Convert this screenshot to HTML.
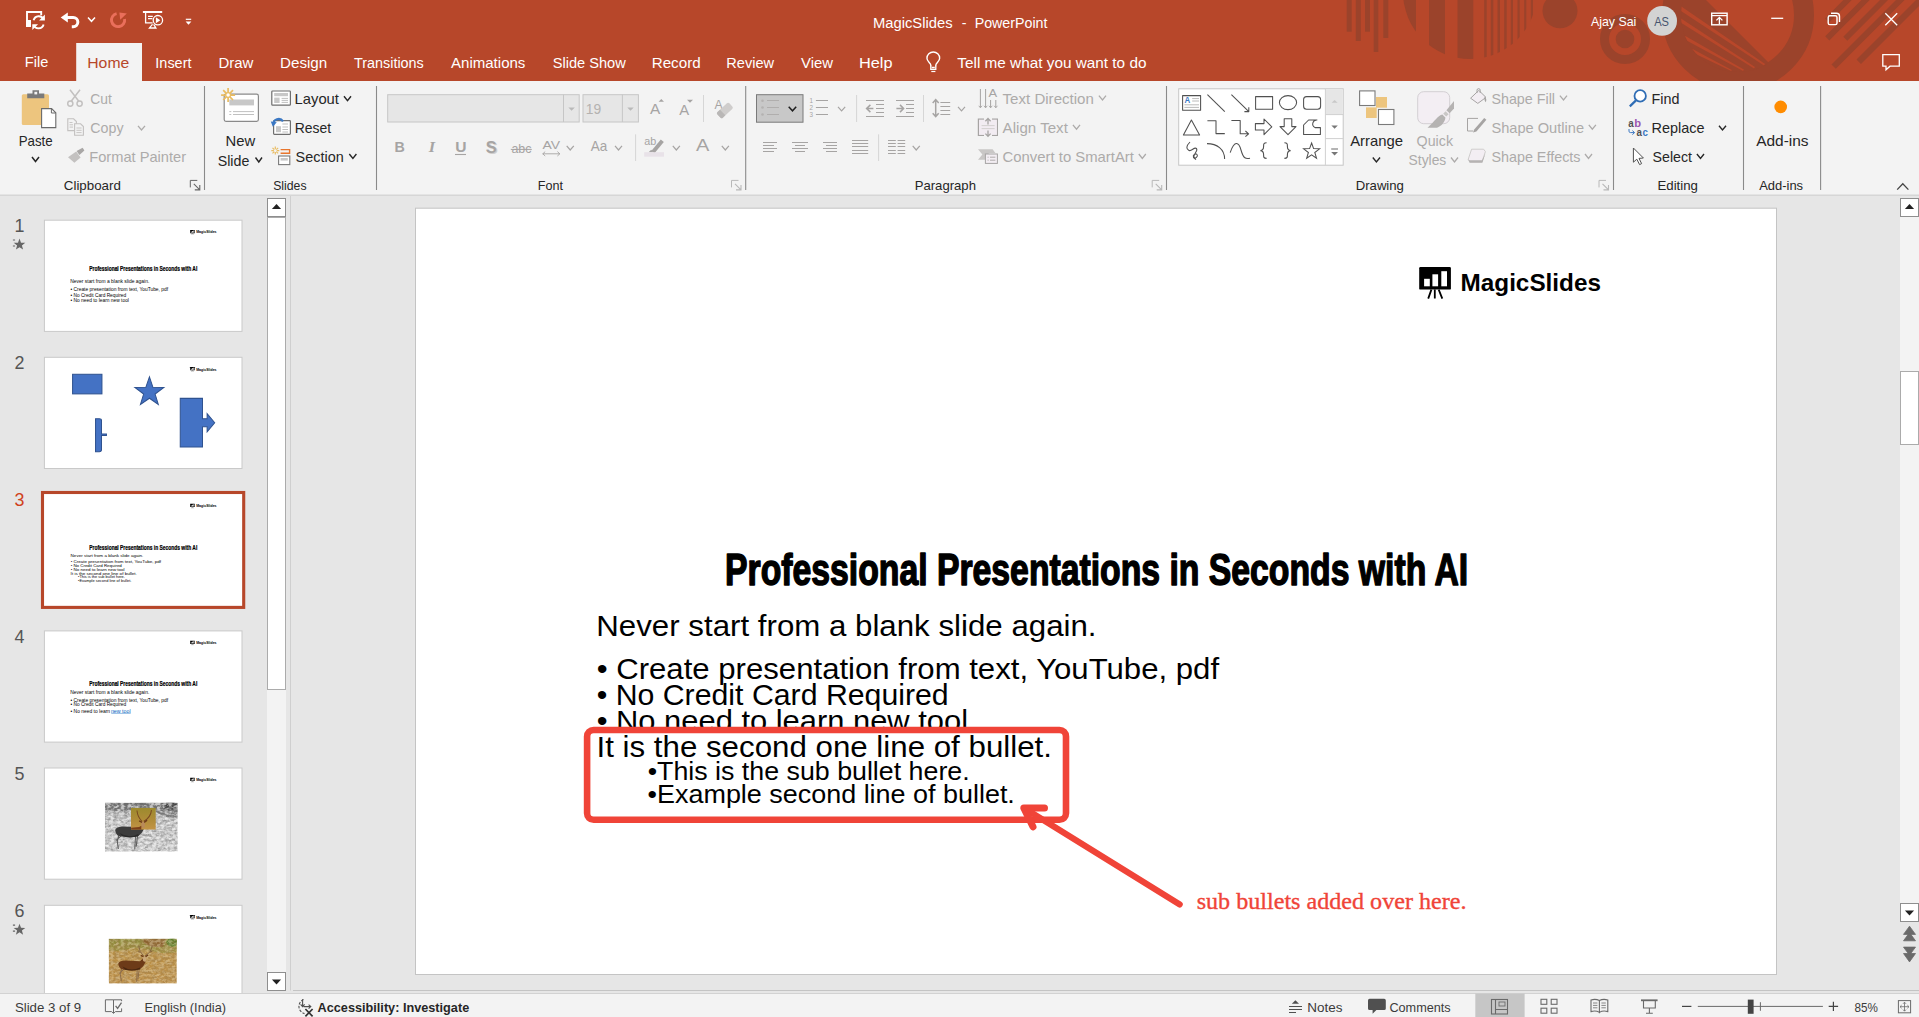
<!DOCTYPE html>
<html lang="en"><head><meta charset="utf-8"><title>MagicSlides - PowerPoint</title>
<style>
html,body{margin:0;padding:0;width:1919px;height:1017px;overflow:hidden;background:#E6E6E6;font-family:"Liberation Sans",sans-serif}
.r{position:absolute;overflow:hidden}
.r svg{display:block;font-family:"Liberation Sans",sans-serif}
svg text{white-space:pre}
</style></head><body>

<div class="r titlebar" style="left:0px;top:0px;width:1919px;height:81px;background:#B7472A"><svg width="1919" height="81" viewBox="0 0 1919 81"><g fill="#9B432B">
<rect x="1346.7" y="0" width="5.0" height="31.7"/>
<rect x="1355.8" y="0" width="5.0" height="41"/>
<rect x="1365" y="0" width="5.0" height="31.7"/>
<rect x="1373.7" y="0" width="4.6" height="52"/>
<rect x="1383.3" y="0" width="5.0" height="38"/>
</g>
<clipPath id="cpA"><circle cx="1470" cy="-8" r="67"/></clipPath>
<g clip-path="url(#cpA)" fill="#9B432B">
<rect x="1400" y="0" width="16.0" height="70"/>
<rect x="1429" y="0" width="16.0" height="70"/>
<rect x="1457.5" y="0" width="15.8" height="70"/>
<rect x="1484.2" y="0" width="2.5" height="70"/>
<rect x="1490.8" y="0" width="2.5" height="70"/>
<rect x="1497.5" y="0" width="2.5" height="70"/>
<rect x="1504.2" y="0" width="2.5" height="70"/>
<rect x="1510.8" y="0" width="2.2" height="70"/>
<rect x="1517.5" y="0" width="2.2" height="70"/>
<rect x="1524.2" y="0" width="2.1" height="70"/>
<rect x="1530.8" y="0" width="2.2" height="70"/>
</g>
<circle cx="1560" cy="10.8" r="17.5" fill="#9B432B"/>
<circle cx="1625" cy="39" r="20.5" fill="none" stroke="#9B432B" stroke-width="9"/><circle cx="1625" cy="39" r="9.3" fill="#9B432B"/>
<clipPath id="cpB"><rect x="0" y="0" width="1919" height="81"/></clipPath>
<g clip-path="url(#cpB)"><circle cx="1738" cy="15" r="66" fill="none" stroke="#9B432B" stroke-width="20"/>
<clipPath id="cpC"><circle cx="1738" cy="15" r="57"/></clipPath>
<g clip-path="url(#cpC)"><path d="M1695 -11L1780 74L1660 90L1660 -11Z" fill="#9B432B"/>
<path d="M1674.9 7.0L1763.9 65.6L1765.1 64.0L1677.1 3.6Z M1675.0 19.1L1754.0 68.6L1755.0 67.0L1677.0 15.9Z M1679.1 36.6L1743.1 71.0L1743.9 69.6L1680.9 33.4Z M1689.3 50.9L1731.2 71.1L1731.8 69.9L1690.7 48.1Z" fill="#B8472A"/>
</g></g>
<path d="M1825.0 18.4L1829.2 22.6L2029.2 -177.4L2025.0 -181.6Z M1825.2 36.3L1829.3 40.4L2029.3 -159.6L2025.2 -163.7Z M1843.3 36.7L1847.3 40.7L2047.3 -159.3L2043.3 -163.3Z M1831.5 64.5L1835.8 68.8L2035.8 -131.2L2031.5 -135.5Z M1856.5 59.5L1861.0 64.0L2061.0 -136.0L2056.5 -140.5Z" fill="#9B432B"/>
<g fill="none" stroke="#fff" stroke-width="1.9" stroke-linejoin="miter"><path d="M31 26H27V12H41.200V15.200"/></g><rect x="26.100" y="20" width="4.900" height="7" fill="#fff"/><g fill="none" stroke="#fff" stroke-width="1.900"><path d="M43.700 19.400A5.400 5.400 0 0 0 33.600 20.200"/><path d="M33.500 25.200A5.400 5.400 0 0 0 43.600 24.400"/></g><path d="M44.900 14.600V20.400H39.100Z" fill="#fff"/><path d="M32.300 30V24.200H38.100Z" fill="#fff"/>
<path d="M60.700 17.400L67.800 12.400V22.400Z" fill="#fff"/><path d="M66.500 17.400H73.200A4.650 4.650 0 0 1 73.200 26.700H71.800" fill="none" stroke="#fff" stroke-width="3"/>
<path d="M88.0 17.5L91.5 21.3L95.0 17.5" fill="none" stroke="#fff" stroke-width="1.5"/>
<path d="M116.600 13.600A6.600 6.600 0 1 0 124.600 19" fill="none" stroke="#EA6F5B" stroke-width="2.900"/><path d="M119.400 12.400L126.800 13.400L120.200 19.800Z" fill="#EA6F5B"/>
<path d="M142.900 12H162.200" stroke="#fff" stroke-width="2"/><g fill="none" stroke="#fff" stroke-width="1.300"><path d="M145.600 12.500V22.800H152.600"/><path d="M148 16.400H152.800M148 18.600H152.400" stroke-width="1.200"/><circle cx="157.900" cy="20.200" r="4.700"/></g><path d="M152.300 23.400L148.100 28.800H157L154.600 24.600L152.300 24.600Z" fill="#fff"/><path d="M150.800 27.200L152.400 25.200H153.600L154.600 27.200Z" fill="#B7472A"/><path d="M155.900 17.200V23.200L160.300 20.200Z" fill="#fff"/>
<path d="M185.8 19.3H191.2" stroke="#fff" stroke-width="1.2"/><path d="M185.6 21.6H191.4L188.5 24.8Z" fill="#fff"/>
<text x="872.93" y="27.8" font-size="15.2" fill="#fff" textLength="79.68" lengthAdjust="spacingAndGlyphs">MagicSlides</text><text x="961.80" y="27.8" font-size="15.2" fill="#fff" textLength="4.75" lengthAdjust="spacingAndGlyphs">-</text><text x="974.66" y="27.8" font-size="15.2" fill="#fff" textLength="72.81" lengthAdjust="spacingAndGlyphs">PowerPoint</text>
<text x="1591.00" y="25.7" font-size="12.4" fill="#fff" textLength="45.35" lengthAdjust="spacingAndGlyphs">Ajay Sai</text>
<circle cx="1662.100" cy="20.900" r="14.900" fill="#D3D3D3"/>
<text x="1654.20" y="25.6" font-size="12.2" fill="#46546E" textLength="14.82" lengthAdjust="spacingAndGlyphs">AS</text>
<g fill="none" stroke="#fff" stroke-width="1.4"><rect x="1711.7" y="13.2" width="15.4" height="11.6"/><path d="M1711.7 15.6H1727" stroke-width="1.2"/><path d="M1719.4 24V17.6M1716.4 20.4L1719.4 17.4L1722.4 20.4" stroke-width="1.3"/><path d="M1771.2 18.3H1783.2" stroke-width="1.3"/><rect x="1828.2" y="15.8" width="8.8" height="8.8" rx="1.6"/><path d="M1831 13.3H1836.5A3 3 0 0 1 1839.5 16.3V22" /><path d="M1885.3 13.2L1897.2 25.2M1897.2 13.2L1885.3 25.2" stroke-width="1.3"/><path d="M1882.8 54.7H1899.3V66.2H1890L1886 69.8V66.2H1882.8Z" stroke-width="1.3"/></g>
<rect x="76.2" y="43" width="65.8" height="38.5" fill="#F3F3F3"/>
<text x="24.84" y="67.0" font-size="15.2" fill="#fff" textLength="23.49" lengthAdjust="spacingAndGlyphs">File</text>
<text x="87.26" y="67.7" font-size="15.2" fill="#B7472A" textLength="42.00" lengthAdjust="spacingAndGlyphs">Home</text>
<text x="155.35" y="67.7" font-size="15.2" fill="#fff" textLength="36.11" lengthAdjust="spacingAndGlyphs">Insert</text>
<text x="218.51" y="67.7" font-size="15.2" fill="#fff" textLength="34.95" lengthAdjust="spacingAndGlyphs">Draw</text>
<text x="280.00" y="67.7" font-size="15.2" fill="#fff" textLength="47.25" lengthAdjust="spacingAndGlyphs">Design</text>
<text x="354.00" y="67.7" font-size="15.2" fill="#fff" textLength="69.82" lengthAdjust="spacingAndGlyphs">Transitions</text>
<text x="451.00" y="67.7" font-size="15.2" fill="#fff" textLength="74.40" lengthAdjust="spacingAndGlyphs">Animations</text>
<text x="552.70" y="67.7" font-size="15.2" fill="#fff" textLength="73.07" lengthAdjust="spacingAndGlyphs">Slide Show</text>
<text x="651.70" y="67.7" font-size="15.2" fill="#fff" textLength="48.95" lengthAdjust="spacingAndGlyphs">Record</text>
<text x="726.34" y="67.7" font-size="15.2" fill="#fff" textLength="47.83" lengthAdjust="spacingAndGlyphs">Review</text>
<text x="801.00" y="67.7" font-size="15.2" fill="#fff" textLength="31.97" lengthAdjust="spacingAndGlyphs">View</text>
<text x="858.93" y="67.7" font-size="15.2" fill="#fff" textLength="33.55" lengthAdjust="spacingAndGlyphs">Help</text>
<text x="957.30" y="67.7" font-size="15.2" fill="#fff" textLength="189.15" lengthAdjust="spacingAndGlyphs">Tell me what you want to do</text>
<g fill="none" stroke="#fff" stroke-width="1.400"><path d="M930.800 66.200V65.200C930.800 63 926.950 61.600 926.950 58.300A6.350 6.350 0 0 1 939.650 58.300C939.650 61.600 935.800 63 935.800 65.200V66.200"/><path d="M930.800 65.800V69.300H935.800V65.800M931.800 67.500H934.800" stroke-width="1.300"/><path d="M931.300 71.500H935.400" stroke-width="1.200"/></g></svg></div>
<div class="r ribbon" style="left:0px;top:81px;width:1919px;height:115px;background:#F3F3F3"><svg width="1919" height="115" viewBox="0 81 1919 115"><rect x="21.8" y="94.2" width="27.2" height="30.7" rx="1.5" fill="#EDC57E"/>
<path d="M27.2 98.3V93.6H32.5V90.2H39V93.6H44.3V98.3Z" fill="#7A7A7A"/><rect x="34.4" y="91.8" width="2.8" height="2.6" fill="#F3F3F3"/>
<path d="M41.6 108.6H51.6L55.8 112.8V127.6H41.6Z" fill="#fff" stroke="#6A6A6A" stroke-width="1.1"/><path d="M51.4 108.8V113H55.6" fill="none" stroke="#6A6A6A" stroke-width="1"/>
<text x="18.69" y="145.5" font-size="14.6" fill="#262626" textLength="34.02" lengthAdjust="spacingAndGlyphs">Paste</text>
<path d="M32.0 157.0L35.5 161.5L39.0 157.0" fill="none" stroke="#262626" stroke-width="1.5"/>
<g fill="none" stroke="#C3C1C0" stroke-width="1.5"><path d="M70 89.8L79.2 101.8M80 89.8L70.800 101.8"/><circle cx="70.3" cy="103.6" r="2.6"/><circle cx="79.6" cy="103.6" r="2.6"/></g>
<text x="90.30" y="103.6" font-size="14.6" fill="#ADABAA" textLength="21.55" lengthAdjust="spacingAndGlyphs">Cut</text>
<g fill="#F3F3F3" stroke="#C3C1C0" stroke-width="1.1"><path d="M67.8 118.8H73.6L76.4 121.600V130.6H67.8Z"/><path d="M74.6 123.8H80.6L83.400 126.600V135.2H74.600Z"/></g><path d="M69.5 122.5H72.500M69.500 124.8H73M69.500 127.1H73M76.400 128H81.600M76.400 130.3H81.600M76.400 132.600H81.600" stroke="#C3C1C0" stroke-width="0.9"/>
<text x="90.30" y="132.8" font-size="14.6" fill="#ADABAA" textLength="33.21" lengthAdjust="spacingAndGlyphs">Copy</text>
<path d="M138.0 125.8L141.5 130.0L145.0 125.8" fill="none" stroke="#ADABAA" stroke-width="1.3"/>
<path d="M68 157.200L76.200 151.500L80.600 157.600L74.400 162.800Z" fill="#C3C1C0"/><path d="M76.600 151L82.600 147.800L84.400 150.600L79.400 155Z" fill="#A9A7A6"/>
<text x="89.30" y="161.5" font-size="14.6" fill="#ADABAA" textLength="96.76" lengthAdjust="spacingAndGlyphs">Format Painter</text>
<text x="63.80" y="189.8" font-size="13" fill="#262626" textLength="57.04" lengthAdjust="spacingAndGlyphs">Clipboard</text>
<path d="M197.3 180.4H190.3V187.4" fill="none" stroke="#666" stroke-width="1"/><path d="M193.8 183.9L199.3 189.4M199.8 184.9V189.9H194.8" fill="none" stroke="#666" stroke-width="1.1"/>
<path d="M204.5 86V190" stroke="#8A8A8A" stroke-width="1.1"/>
<rect x="224.2" y="94.2" width="34.2" height="27.1" rx="1.8" fill="#fff" stroke="#8A8A8A" stroke-width="1.2"/>
<rect x="229.3" y="99.5" width="24.7" height="5.9" fill="#C8C8C8"/><path d="M233 111.600H254M233 114.500H254M229.300 111.600H231.300M229.300 114.500H231.300" stroke="#C0C0C0" stroke-width="1"/>
<circle cx="228.1" cy="95.1" r="8" fill="#F3F3F3" opacity="0"/><path d="M230.7 95.1L235.1 95.1M229.9 96.9L233.0 100.0M228.1 97.7L228.1 102.1M226.3 96.9L223.2 100.0M225.5 95.1L221.1 95.1M226.3 93.3L223.2 90.2M228.1 92.5L228.1 88.1M229.9 93.3L233.0 90.2" stroke="#E9BC62" stroke-width="1.7"/><circle cx="228.1" cy="95.1" r="2.4" fill="#fff" stroke="#E9BC62" stroke-width="1.3"/>
<text x="225.58" y="145.5" font-size="14.6" fill="#262626" textLength="29.65" lengthAdjust="spacingAndGlyphs">New</text>
<text x="217.70" y="165.6" font-size="14.6" fill="#262626" textLength="31.61" lengthAdjust="spacingAndGlyphs">Slide</text>
<path d="M255.5 157.5L258.8 162.0L262.0 157.5" fill="none" stroke="#262626" stroke-width="1.4"/>
<rect x="271.8" y="91" width="18.6" height="14.2" rx="0.8" fill="#fff" stroke="#6E6E6E" stroke-width="1.2"/><rect x="274.2" y="93" width="13.8" height="3.2" fill="#C8C8C8"/><rect x="274.2" y="97.6" width="5.4" height="5.4" fill="#C8C8C8"/><path d="M281.600 98.400H288M281.600 100.400H288M281.600 102.400H288" stroke="#B8B8B8" stroke-width="0.9"/>
<text x="294.59" y="103.6" font-size="14.6" fill="#262626" textLength="44.37" lengthAdjust="spacingAndGlyphs">Layout</text>
<path d="M344.0 96.2L347.5 100.6L351.0 96.2" fill="none" stroke="#262626" stroke-width="1.4"/>
<rect x="273.6" y="120.6" width="16.8" height="13.8" rx="0.8" fill="#fff" stroke="#6E6E6E" stroke-width="1.2"/><rect x="276" y="126.200" width="5" height="6" fill="#C8C8C8"/><path d="M282.400 124H288M282.400 127H288M282.400 129.500H288M282.400 132H288" stroke="#B8B8B8" stroke-width="0.9"/>
<path d="M273.400 124.600A5.2 5.2 0 0 1 283 121.400" fill="none" stroke="#3B78C3" stroke-width="2.2"/><path d="M270.800 121.600L276.800 122.200L272.800 126.800Z" fill="#3B78C3"/>
<text x="294.65" y="132.8" font-size="14.6" fill="#262626" textLength="36.41" lengthAdjust="spacingAndGlyphs">Reset</text>
<path d="M276.7 150.6L279.3 150.6M276.3 151.6L278.1 153.4M275.3 152.0L275.3 154.6M274.3 151.6L272.5 153.4M273.9 150.6L271.3 150.6M274.3 149.6L272.5 147.8M275.3 149.2L275.3 146.6M276.3 149.6L278.1 147.8" stroke="#E9BC62" stroke-width="1.2"/>
<path d="M280.600 149.600H289.600V153.200H280.600" fill="none" stroke="#E8762D" stroke-width="1.4"/><rect x="278.6" y="156" width="11.2" height="8.6" fill="#fff" stroke="#7A7A7A" stroke-width="1.1"/><rect x="280.600" y="158" width="7.200" height="2.600" fill="#C8C8C8"/>
<text x="295.60" y="161.5" font-size="14.6" fill="#262626" textLength="48.12" lengthAdjust="spacingAndGlyphs">Section</text>
<path d="M349.3 154.0L352.9 158.4L356.4 154.0" fill="none" stroke="#262626" stroke-width="1.4"/>
<text x="273.20" y="189.8" font-size="13" fill="#262626" textLength="33.33" lengthAdjust="spacingAndGlyphs">Slides</text>
<path d="M376.5 86V190" stroke="#8A8A8A" stroke-width="1.1"/>
<rect x="387.7" y="94.7" width="191.5" height="27.3" fill="#E6E6E6" stroke="#C6C6C6" stroke-width="1"/><path d="M563.500 94.700V122" stroke="#C6C6C6"/><path d="M568.400 107.600H574.800L571.600 110.800Z" fill="#B9B9B9"/>
<rect x="583" y="94.7" width="55.4" height="27.3" fill="#E6E6E6" stroke="#C6C6C6" stroke-width="1"/><path d="M622.400 94.700V122" stroke="#C6C6C6"/><path d="M627.300 107.600H633.700L630.500 110.800Z" fill="#B9B9B9"/>
<text x="585.87" y="113.6" font-size="15.0" fill="#B4B2B0" textLength="15.44" lengthAdjust="spacingAndGlyphs">19</text>
<text x="394.56" y="152.3" font-size="15.2" fill="#A6A4A3" textLength="10.31" lengthAdjust="spacingAndGlyphs" font-weight="bold">B</text>
<text x="428.65" y="152.3" font-size="15.6" fill="#A6A4A3" textLength="6.37" lengthAdjust="spacingAndGlyphs" font-weight="bold" font-family='"Liberation Serif", serif' font-style="italic">I</text>
<text x="455.30" y="152.3" font-size="15" fill="#A6A4A3" textLength="11.27" lengthAdjust="spacingAndGlyphs" font-weight="bold">U</text><path d="M455 154.500H466" stroke="#A6A4A3" stroke-width="1.1"/>
<text x="487.00" y="154.0" font-size="16" fill="#D0CECD" textLength="10.87" lengthAdjust="spacingAndGlyphs" font-weight="bold">S</text>
<text x="485.80" y="152.8" font-size="16" fill="#A6A4A3" textLength="10.87" lengthAdjust="spacingAndGlyphs" font-weight="bold">S</text>
<text x="511.40" y="152.6" font-size="12.6" fill="#A6A4A3" textLength="20.09" lengthAdjust="spacingAndGlyphs">abc</text><path d="M510.800 149.400H531.800" stroke="#A6A4A3" stroke-width="1"/>
<text x="542.50" y="148.5" font-size="11.6" fill="#A6A4A3" textLength="17.58" lengthAdjust="spacingAndGlyphs">AV</text><path d="M542.600 153.800H560M545.200 151.600L542.800 153.800L545.200 156M557.400 151.600L559.800 153.800L557.400 156" fill="none" stroke="#A6A4A3" stroke-width="0.9"/>
<path d="M566.7 145.8L570.2 150.0L573.8 145.8" fill="none" stroke="#A6A4A3" stroke-width="1.2"/>
<text x="590.80" y="151.4" font-size="14.8" fill="#A6A4A3" textLength="16.50" lengthAdjust="spacingAndGlyphs">Aa</text>
<path d="M615.0 145.8L618.5 150.0L622.0 145.8" fill="none" stroke="#A6A4A3" stroke-width="1.2"/>
<path d="M635.6 134.3V161" stroke="#D6D6D6" stroke-width="1"/>
<text x="650.00" y="113.6" font-size="14" fill="#A6A4A3" textLength="10.27" lengthAdjust="spacingAndGlyphs">A</text><path d="M658.600 101.800L661.300 98.900L664 101.800Z" fill="#A6A4A3"/>
<text x="679.20" y="114.8" font-size="14" fill="#A6A4A3" textLength="9.90" lengthAdjust="spacingAndGlyphs">A</text><path d="M687 99.800H693L690 102.800Z" fill="#A6A4A3"/>
<path d="M703.5 95V122" stroke="#D6D6D6" stroke-width="1"/>
<text x="714.40" y="108.9" font-size="13.6" fill="#A6A4A3" textLength="8.16" lengthAdjust="spacingAndGlyphs">A</text>
<g transform="rotate(-43 724.800 110.400)"><rect x="716.600" y="106.600" width="16.400" height="7.800" rx="1.800" fill="#CFCDCC"/><path d="M718.400 106.600H721.800V114.400H718.400A1.800 1.800 0 0 1 716.600 112.600V108.400A1.800 1.800 0 0 1 718.400 106.600Z" fill="#B9B7B6"/></g>
<text x="644.20" y="145.0" font-size="11.8" fill="#A6A4A3" textLength="12.00" lengthAdjust="spacingAndGlyphs">ab</text>
<path d="M651.500 150.800L660.800 139.600L663.800 142L654.500 153.200Z" fill="#A6A4A3"/><path d="M648.600 152.200L651.200 149.800L653.600 152.200Z" fill="#A6A4A3"/><rect x="644.2" y="152.200" width="19.800" height="4.500" fill="#E8E2E8"/>
<path d="M672.8 145.8L676.3 150.0L679.9 145.8" fill="none" stroke="#A6A4A3" stroke-width="1.2"/>
<text x="696.00" y="150.8" font-size="17.4" fill="#A6A4A3" textLength="13.34" lengthAdjust="spacingAndGlyphs">A</text>
<path d="M721.8 145.8L725.3 150.0L728.9 145.8" fill="none" stroke="#A6A4A3" stroke-width="1.2"/>
<text x="537.73" y="189.8" font-size="13" fill="#262626" textLength="25.19" lengthAdjust="spacingAndGlyphs">Font</text>
<path d="M738.5 180.4H731.5V187.4" fill="none" stroke="#B8B8B8" stroke-width="1"/><path d="M735.0 183.9L740.5 189.4M741.0 184.9V189.9H736.0" fill="none" stroke="#B8B8B8" stroke-width="1.1"/>
<path d="M745.7 86V190" stroke="#8A8A8A" stroke-width="1.1"/><rect x="756.5" y="94.7" width="46.5" height="27.5" fill="#C8C8C8" stroke="#7A7A7A" stroke-width="1"/>
<circle cx="762.5" cy="100.7" r="1.3" fill="#B4B2B1"/>
<circle cx="762.5" cy="107.5" r="1.3" fill="#B4B2B1"/>
<circle cx="762.5" cy="114.5" r="1.3" fill="#B4B2B1"/>
<path d="M767.0 100.5H779.0M767.0 107.5H779.0M767.0 114.5H779.0" stroke="#B0AEAD" stroke-width="1"/>
<path d="M788.7 106.8L792.5 110.8L796.2 106.8" fill="none" stroke="#1E1E1E" stroke-width="1.5"/>
<text x="809.60" y="103.2" font-size="6.6" fill="#A6A4A3" textLength="3.48" lengthAdjust="spacingAndGlyphs">1</text>
<text x="809.60" y="110.0" font-size="6.6" fill="#A6A4A3" textLength="3.48" lengthAdjust="spacingAndGlyphs">2</text>
<text x="809.60" y="117.0" font-size="6.6" fill="#A6A4A3" textLength="3.48" lengthAdjust="spacingAndGlyphs">3</text>
<path d="M815.9 100.5H828.0M815.9 107.5H828.0M815.9 114.5H828.0" stroke="#A6A4A3" stroke-width="1"/>
<path d="M838.0 106.8L841.6 110.8L845.2 106.8" fill="none" stroke="#A6A4A3" stroke-width="1.2"/>
<path d="M856.6 95V122" stroke="#D6D6D6" stroke-width="1"/>
<path d="M866 100.500H884M876 104.500H884M876 108.500H884M876 112.500H884M866 116.500H884" stroke="#A6A4A3" stroke-width="1"/><path d="M873.400 108.500H866.800M870.400 104.900L866.600 108.500L870.400 112.100" fill="none" stroke="#A6A4A3" stroke-width="1.5"/>
<path d="M896 100.500H914M906 104.500H914M906 108.500H914M906 112.500H914M896 116.500H914" stroke="#A6A4A3" stroke-width="1"/><path d="M896.400 108.500H903M900 104.900L903.600 108.500L900 112.100" fill="none" stroke="#A6A4A3" stroke-width="1.500"/>
<path d="M923.5 95V122" stroke="#D6D6D6" stroke-width="1"/>
<path d="M935.700 100V116M932.700 103L935.700 99.600L938.700 103M932.700 113.200L935.700 116.600L938.700 113.200" fill="none" stroke="#A6A4A3" stroke-width="1.500"/><path d="M940.4 102.5H950.2M940.4 106.5H950.2M940.4 110.5H950.2M940.4 114.5H950.2" stroke="#A6A4A3" stroke-width="1"/>
<path d="M958.0 106.8L961.5 110.8L965.0 106.8" fill="none" stroke="#A6A4A3" stroke-width="1.2"/>
<path d="M763 142.500H777M763 145.500H774M763 148.500H777M763 151.500H774" stroke="#A6A4A3" stroke-width="1"/>
<path d="M792 142.500H808M795 145.500H805M792 148.500H808M795 151.500H805" stroke="#A6A4A3" stroke-width="1"/>
<path d="M823 142.500H837M826 145.500H837M823 148.500H837M826 151.500H837" stroke="#A6A4A3" stroke-width="1"/>
<path d="M852.0 140.5H868.2M852.0 143.5H868.2M852.0 146.5H868.2M852.0 150.5H868.2M852.0 153.5H868.2" stroke="#A6A4A3" stroke-width="1"/>
<path d="M878.6 134.3V161" stroke="#D6D6D6" stroke-width="1"/>
<path d="M888.0 140.5H895.8M888.0 143.5H895.8M888.0 146.5H895.8M888.0 150.5H895.8M888.0 153.5H895.8" stroke="#A6A4A3" stroke-width="1"/><path d="M897.6 140.5H905.2M897.6 143.5H905.2M897.6 146.5H905.2M897.6 150.5H905.2M897.6 153.5H905.2" stroke="#A6A4A3" stroke-width="1"/>
<path d="M912.7 145.8L916.2 150.0L919.8 145.8" fill="none" stroke="#A6A4A3" stroke-width="1.2"/>
<path d="M980.400 89V107.600M985.600 89V107.600M990.600 100V107.600M995.800 100V107.600" stroke="#A6A4A3" stroke-width="1"/><path d="M978.800 105.800L980.400 107.800L982 105.800M984 105.800L985.600 107.800L987.200 105.800M989 105.800L990.600 107.800L992.200 105.800M994.200 105.800L995.800 107.800L997.400 105.800" fill="none" stroke="#A6A4A3" stroke-width="0.9"/>
<text x="988.60" y="97.4" font-size="11.5" fill="#A6A4A3" textLength="8.63" lengthAdjust="spacingAndGlyphs">A</text>
<text x="1002.60" y="103.6" font-size="14.6" fill="#ADABAA" textLength="91.22" lengthAdjust="spacingAndGlyphs">Text Direction</text>
<path d="M1098.9 95.6L1102.5 100.0L1106.0 95.6" fill="none" stroke="#ADABAA" stroke-width="1.3"/>
<path d="M984 119.200H978.400V135.400H984M992 119.200H997.400V135.400H992" fill="none" stroke="#A6A4A3" stroke-width="1.2"/><rect x="979" y="119.800" width="18" height="15" fill="#F1EAF1" opacity="0.8"/><path d="M988 118.600V124.400M985.400 121.200L988 118.400L990.600 121.200M988 136.200V130.400M985.400 133.600L988 136.400L990.600 133.600" fill="none" stroke="#A6A4A3" stroke-width="1.3"/><path d="M981.600 125.600H994.600M981.600 128.600H994.600" stroke="#CFCDCC" stroke-width="0.9"/>
<text x="1002.60" y="132.8" font-size="14.6" fill="#ADABAA" textLength="65.26" lengthAdjust="spacingAndGlyphs">Align Text</text>
<path d="M1072.9 124.8L1076.5 129.2L1080.0 124.8" fill="none" stroke="#ADABAA" stroke-width="1.3"/>
<path d="M978 149.200H992.600L995.400 153H989L985 159.800H978L982.400 154.500Z" fill="#C9C7C6"/><rect x="985.400" y="154" width="12" height="9.400" fill="#F3EEF3" stroke="#A6A4A3" stroke-width="1"/><path d="M987.600 157.200H988.600M990 157.200H995.400M987.600 160.200H988.600M990 160.200H995.400" stroke="#A6A4A3" stroke-width="0.9"/>
<text x="1002.60" y="161.5" font-size="14.6" fill="#ADABAA" textLength="131.36" lengthAdjust="spacingAndGlyphs">Convert to SmartArt</text>
<path d="M1138.8 154.0L1142.3 158.4L1145.8 154.0" fill="none" stroke="#ADABAA" stroke-width="1.3"/>
<text x="914.69" y="189.8" font-size="13" fill="#262626" textLength="61.24" lengthAdjust="spacingAndGlyphs">Paragraph</text>
<path d="M1159.2 180.4H1152.2V187.4" fill="none" stroke="#B8B8B8" stroke-width="1"/><path d="M1155.7 183.9L1161.2 189.4M1161.7 184.9V189.9H1156.7" fill="none" stroke="#B8B8B8" stroke-width="1.1"/>
<path d="M1166.5 86V190" stroke="#8A8A8A" stroke-width="1.1"/>
<rect x="1178.7" y="88.8" width="164.5" height="76.4" fill="#fff" stroke="#C6C6C6" stroke-width="1"/>
<rect x="1325.900" y="89.300" width="16.800" height="25.200" fill="#E6E6E6"/><path d="M1325.400 88.800V165.200M1325.400 114.600H1343.200M1325.400 138.600H1343.200" stroke="#D0D0D0" stroke-width="1" fill="none"/>
<path d="M1331.600 102.800L1334.600 100L1337.600 102.800Z" fill="#C8C8C8"/><path d="M1331.400 125.600H1337.800L1334.600 128.800Z" fill="#777"/><path d="M1331.200 149H1338" stroke="#777" stroke-width="1.1"/><path d="M1331.200 152H1338L1334.600 155.400Z" fill="#777"/>
<g fill="none" stroke="#505050" stroke-width="1.05" stroke-linejoin="round"><rect x="1182.600" y="95.600" width="18" height="14.600" fill="#fff"/><path d="M1192.200 98.600H1199M1192.200 101H1199M1184.400 104.800H1199M1184.400 107.400H1199" stroke="#A8A8A8" stroke-width="0.800"/><path d="M1207.400 94.600L1224.800 111.600"/><path d="M1231.400 94.600L1248.600 111.400M1244.400 111.600H1248.800V107.200"/><rect x="1255.600" y="96.600" width="17" height="12.600"/><ellipse cx="1288" cy="102.600" rx="8.600" ry="7"/><rect x="1303.600" y="96.600" width="17" height="12.600" rx="3"/><path d="M1191.400 120L1199.600 135H1183.400Z"/><path d="M1207.400 120.800H1216V133.600H1224.800"/><path d="M1231.400 120.400H1240.200V133.800H1248.200M1245.400 131L1248.600 133.800L1245.400 136.600"/><path d="M1255.400 123.600H1264V119L1271.800 126.800L1264 134.600V130H1255.400Z"/><path d="M1284.200 118.800H1291.800V126.600H1296L1288 134.600L1280 126.600H1284.200Z"/><path d="M1303.600 125V134.400H1320.400V127.600H1315A4 4 0 0 1 1317 120H1308.600Z"/><path d="M1190 142C1186 146 1186 149 1189 150.500C1192 151.500 1194 146.500 1196.500 148.500C1198.500 151 1193 154 1194 157C1195 159.500 1198.500 156.500 1197 154.500C1195.500 153 1192.500 155 1193.500 157.500L1196 159.600"/><path d="M1207 143.600C1217 143.600 1224.600 149 1224.600 159"/><path d="M1230.200 152.600C1234 141 1238.600 141 1241 150C1243.400 159 1246 159 1250 158.200"/></g>
<text x="1184.60" y="102.6" font-size="8.2" fill="#3B78C3" textLength="5.72" lengthAdjust="spacingAndGlyphs" font-weight="bold">A</text>
<path d="M1266.600 142.800C1263.400 142.800 1263.600 144.600 1263.600 146.600C1263.600 148.800 1263.400 150.400 1260.400 150.600C1263.400 150.800 1263.600 152.400 1263.600 154.600C1263.600 156.600 1263.400 158.400 1266.600 158.400" fill="none" stroke="#505050" stroke-width="1.100"/><path d="M1284.400 142.800C1287.600 142.800 1287.400 144.600 1287.400 146.600C1287.400 148.800 1287.600 150.400 1290.600 150.600C1287.600 150.800 1287.400 152.400 1287.400 154.600C1287.400 156.600 1287.600 158.400 1284.400 158.400" fill="none" stroke="#505050" stroke-width="1.100"/><polygon points="1311.6,143.0 1313.6,148.6 1319.6,148.8 1314.8,152.5 1316.5,158.2 1311.6,154.8 1306.7,158.2 1308.4,152.5 1303.6,148.8 1309.6,148.6" fill="none" stroke="#505050" stroke-width="1.050" stroke-linejoin="miter"/>
<rect x="1376" y="97" width="11" height="10.700" fill="#EDC57E"/><rect x="1366" y="107.400" width="10.700" height="10.600" fill="#EDC57E"/><rect x="1359.600" y="90.900" width="15.400" height="14.600" fill="#fff" stroke="#7A7A7A" stroke-width="1.100"/><rect x="1378.500" y="109.500" width="15.400" height="15" fill="#fff" stroke="#7A7A7A" stroke-width="1.100"/>
<text x="1350.20" y="145.5" font-size="14.6" fill="#262626" textLength="52.82" lengthAdjust="spacingAndGlyphs">Arrange</text>
<path d="M1372.8 157.5L1376.4 162.0L1380.0 157.5" fill="none" stroke="#262626" stroke-width="1.4"/>
<rect x="1417.700" y="91.700" width="32" height="32" rx="6" fill="#F3EEF3" stroke="#D3CFD3" stroke-width="1"/><path d="M1454 101L1446.400 110.200L1449.600 113.200L1454 108.600Z" fill="#B5B3B2"/><path d="M1445.600 111.200L1448.600 114.200L1446.200 116.600L1443.200 113.800Z" fill="#C9C7C6"/><path d="M1442.400 114.600C1438 115.500 1435 121 1427.500 127.800H1437C1441.500 126 1445.400 121.500 1445.400 117.400Z" fill="#B5B3B2"/>
<text x="1416.60" y="145.5" font-size="14.6" fill="#ADABAA" textLength="36.41" lengthAdjust="spacingAndGlyphs">Quick</text>
<text x="1408.60" y="165.3" font-size="14.6" fill="#ADABAA" textLength="37.68" lengthAdjust="spacingAndGlyphs">Styles</text>
<path d="M1451.0 157.5L1454.5 162.0L1458.0 157.5" fill="none" stroke="#ADABAA" stroke-width="1.3"/>
<path d="M1470.600 98.200L1478.800 90.400L1486 97.400L1477.800 103.400Z" fill="#F3EEF3" stroke="#A6A4A3" stroke-width="1"/><path d="M1477 93V90.200A1.600 1.600 0 0 1 1480.200 90.200V93" fill="none" stroke="#A6A4A3" stroke-width="1"/><path d="M1484.600 96.600C1486.800 98.600 1486.600 101 1485.600 102.200C1484.400 101 1484 98.600 1484.600 96.600Z" fill="#A6A4A3"/>
<text x="1491.40" y="103.6" font-size="14.6" fill="#ADABAA" textLength="63.64" lengthAdjust="spacingAndGlyphs">Shape Fill</text>
<path d="M1559.9 95.6L1563.5 100.0L1567.0 95.6" fill="none" stroke="#ADABAA" stroke-width="1.3"/>
<path d="M1478 118.400H1467.500V131H1473" fill="none" stroke="#A6A4A3" stroke-width="1"/><path d="M1474 129.800L1484.200 118L1486.400 119.800L1476.400 131.600L1473 132.600Z" fill="#A6A4A3"/>
<text x="1491.40" y="132.8" font-size="14.6" fill="#ADABAA" textLength="92.62" lengthAdjust="spacingAndGlyphs">Shape Outline</text>
<path d="M1588.8 124.8L1592.3 129.2L1595.9 124.8" fill="none" stroke="#ADABAA" stroke-width="1.3"/>
<path d="M1471.600 149.200H1483.600L1485.400 151.600L1482 161.800H1469.600L1468.200 159.400Z" fill="#F3EEF3" stroke="#CFCDCC" stroke-width="1"/><path d="M1468.200 159L1469.600 162.800H1482.400L1485.400 153.600L1482 160.200H1469.400Z" fill="#B5B3B2"/>
<text x="1491.40" y="161.5" font-size="14.6" fill="#ADABAA" textLength="89.09" lengthAdjust="spacingAndGlyphs">Shape Effects</text>
<path d="M1585.0 154.0L1588.5 158.4L1592.0 154.0" fill="none" stroke="#ADABAA" stroke-width="1.3"/>
<text x="1355.69" y="189.8" font-size="13" fill="#262626" textLength="48.24" lengthAdjust="spacingAndGlyphs">Drawing</text>
<path d="M1606.0 180.4H1599.0V187.4" fill="none" stroke="#B8B8B8" stroke-width="1"/><path d="M1602.5 183.9L1608.0 189.4M1608.5 184.9V189.9H1603.5" fill="none" stroke="#B8B8B8" stroke-width="1.1"/>
<path d="M1613.5 86V190" stroke="#8A8A8A" stroke-width="1.1"/>
<circle cx="1640.200" cy="95.900" r="5.700" fill="#fff" stroke="#2F6DB5" stroke-width="1.800"/><path d="M1636 100.400L1629.800 106.400" stroke="#2F6DB5" stroke-width="2.200"/>
<text x="1651.62" y="103.6" font-size="14.6" fill="#262626" textLength="27.90" lengthAdjust="spacingAndGlyphs">Find</text>
<text x="1628.20" y="126.6" font-size="10.5" fill="#505050" textLength="5.45" lengthAdjust="spacingAndGlyphs" font-weight="bold">a</text><text x="1634.20" y="126.6" font-size="10.5" fill="#9A57B0" textLength="6.84" lengthAdjust="spacingAndGlyphs" font-weight="bold">b</text>
<text x="1636.40" y="135.6" font-size="10.5" fill="#505050" textLength="5.45" lengthAdjust="spacingAndGlyphs" font-weight="bold">a</text><text x="1642.40" y="135.6" font-size="10.5" fill="#3B78C3" textLength="5.45" lengthAdjust="spacingAndGlyphs" font-weight="bold">c</text>
<path d="M1629 129V131.200Q1629 132.600 1630.600 132.600H1634.200M1632.400 130.600L1634.600 132.600L1632.400 134.600" fill="none" stroke="#3B78C3" stroke-width="1"/>
<text x="1651.61" y="132.8" font-size="14.6" fill="#262626" textLength="52.90" lengthAdjust="spacingAndGlyphs">Replace</text>
<path d="M1719.0 125.8L1722.5 130.0L1726.0 125.8" fill="none" stroke="#262626" stroke-width="1.4"/>
<path d="M1633.400 148V162.200L1636.800 159.200L1639.600 164.600L1641.600 163.600L1639 158.400L1643.400 158Z" fill="#fff" stroke="#505050" stroke-width="1"/>
<text x="1652.60" y="161.5" font-size="14.6" fill="#262626" textLength="39.45" lengthAdjust="spacingAndGlyphs">Select</text>
<path d="M1696.9 154.0L1700.5 158.4L1704.0 154.0" fill="none" stroke="#262626" stroke-width="1.4"/>
<text x="1657.48" y="189.8" font-size="13" fill="#262626" textLength="40.45" lengthAdjust="spacingAndGlyphs">Editing</text>
<path d="M1743.5 86V190" stroke="#8A8A8A" stroke-width="1.1"/>
<filter id="bl"><feGaussianBlur stdDeviation="0.7"/></filter><circle cx="1780.700" cy="106.900" r="6.300" fill="#FF8C00" filter="url(#bl)"/>
<text x="1756.20" y="145.5" font-size="14.6" fill="#262626" textLength="52.41" lengthAdjust="spacingAndGlyphs">Add-ins</text>
<text x="1759.20" y="189.8" font-size="13" fill="#262626" textLength="43.90" lengthAdjust="spacingAndGlyphs">Add-ins</text>
<path d="M1820.6 86V190" stroke="#8A8A8A" stroke-width="1.1"/>
<path d="M1897.2 189.6L1902.8 183.8L1908.4 189.6" fill="none" stroke="#444" stroke-width="1.3"/><path d="M0 195.250H1919" stroke="#D6D6D6" stroke-width="1.500"/></svg></div>
<div class="r slidepanel" style="left:0px;top:196px;width:291px;height:797px;background:#E6E6E6"><svg width="291" height="797" viewBox="0 196 291 797"><rect x="44.4" y="220.2" width="197.6" height="111.2" fill="#fff" stroke="#C9C9C9" stroke-width="1"/><svg x="44.4" y="220.2" width="197.6" height="111.2" viewBox="0 -8 1360 766" preserveAspectRatio="none" overflow="hidden"><rect x="1003.2" y="59" width="31.7" height="22.6" rx="1.2" fill="#000"/><rect x="1008.1" y="70.8" width="5.7" height="7.5" fill="#fff"/><rect x="1016.4" y="66.3" width="5.7" height="12" fill="#fff"/><rect x="1025.3" y="63.2" width="5.700" height="15.100" fill="#fff"/><path d="M1015.4 81.600L1012.200 90.600M1018.800 81.600V90.600M1022.700 81.600L1026.300 90.600" stroke="#000" stroke-width="1.800"/><text x="1044.57" y="83.0" font-size="23.6" fill="#000" textLength="140.35" lengthAdjust="spacingAndGlyphs" font-weight="bold">MagicSlides</text><text x="309.08" y="343.4" font-size="44.2" fill="#000" textLength="743.06" lengthAdjust="spacingAndGlyphs" font-weight="bold" stroke="#000" stroke-width="1.500" stroke-linejoin="round">Professional Presentations in Seconds with AI</text><text x="177.97" y="428.0" font-size="30.5" fill="#000" textLength="543.78" lengthAdjust="spacingAndGlyphs">Never start from a blank slide again.</text><text x="179.50" y="481.5" font-size="30.5" fill="#000" textLength="671.92" lengthAdjust="spacingAndGlyphs">• Create presentation from text, YouTube, pdf</text><text x="179.52" y="518.0" font-size="30.5" fill="#000" textLength="382.59" lengthAdjust="spacingAndGlyphs">• No Credit Card Required</text><text x="179.50" y="557.0" font-size="30.5" fill="#000" textLength="402.45" lengthAdjust="spacingAndGlyphs">• No need to learn new tool</text></svg><text x="19.4" y="232.2" font-size="17.9" fill="#555" text-anchor="middle">1</text><polygon points="19.5,238.6 21.0,242.7 25.3,242.8 21.9,245.5 23.1,249.6 19.5,247.2 15.9,249.6 17.1,245.5 13.7,242.8 18.0,242.7" fill="#666"/><path d="M12.900 240.0H15.100M12.900 246.0H15.100" stroke="#666" stroke-width="1.200"/><rect x="44.4" y="357.3" width="197.6" height="111.2" fill="#fff" stroke="#C9C9C9" stroke-width="1"/><svg x="44.4" y="357.3" width="197.6" height="111.2" viewBox="0 -8 1360 766" preserveAspectRatio="none" overflow="hidden"><rect x="1003.2" y="59" width="31.7" height="22.6" rx="1.2" fill="#000"/><rect x="1008.1" y="70.8" width="5.7" height="7.5" fill="#fff"/><rect x="1016.4" y="66.3" width="5.7" height="12" fill="#fff"/><rect x="1025.3" y="63.2" width="5.700" height="15.100" fill="#fff"/><path d="M1015.4 81.600L1012.200 90.600M1018.800 81.600V90.600M1022.700 81.600L1026.300 90.600" stroke="#000" stroke-width="1.800"/><text x="1044.57" y="83.0" font-size="23.6" fill="#000" textLength="140.35" lengthAdjust="spacingAndGlyphs" font-weight="bold">MagicSlides</text><g fill="#4472C4" stroke="#2F528F" stroke-width="7"><rect x="194" y="109" width="202" height="135"/><polygon points="723,127 747,199 822,200 762,245 784,317 723,274 661,317 683,245 623,200 698,199"/><path d="M935 275H1088V416H1120V381L1172 443L1120 505V471H1088V610H935Z"/><path d="M352 416H378Q393 416 393 429V521H427V530H393V629Q393 642 378 642H352Z"/></g></svg><text x="19.4" y="369.3" font-size="17.9" fill="#555" text-anchor="middle">2</text><rect x="42.5" y="492.5" width="201.200" height="114.900" fill="#fff" stroke="#B7472A" stroke-width="3.100"/><svg x="44.4" y="494.0" width="197.6" height="111.2" viewBox="0 -8 1360 766" preserveAspectRatio="none" overflow="hidden"><rect x="1003.2" y="59" width="31.7" height="22.6" rx="1.2" fill="#000"/><rect x="1008.1" y="70.8" width="5.7" height="7.5" fill="#fff"/><rect x="1016.4" y="66.3" width="5.7" height="12" fill="#fff"/><rect x="1025.3" y="63.2" width="5.700" height="15.100" fill="#fff"/><path d="M1015.4 81.600L1012.200 90.600M1018.800 81.600V90.600M1022.700 81.600L1026.300 90.600" stroke="#000" stroke-width="1.800"/><text x="1044.57" y="83.0" font-size="23.6" fill="#000" textLength="140.35" lengthAdjust="spacingAndGlyphs" font-weight="bold">MagicSlides</text><text x="309.08" y="377.4" font-size="44.2" fill="#000" textLength="743.06" lengthAdjust="spacingAndGlyphs" font-weight="bold" stroke="#000" stroke-width="1.500" stroke-linejoin="round">Professional Presentations in Seconds with AI</text><text x="180.29" y="428.0" font-size="29.6" fill="#000" textLength="500.26" lengthAdjust="spacingAndGlyphs">Never start from a blank slide again.</text><text x="180.65" y="470.5" font-size="29.6" fill="#000" textLength="622.43" lengthAdjust="spacingAndGlyphs">• Create presentation from text, YouTube, pdf</text><text x="180.68" y="496.6" font-size="29.6" fill="#000" textLength="352.01" lengthAdjust="spacingAndGlyphs">• No Credit Card Required</text><text x="180.66" y="522.6" font-size="29.6" fill="#000" textLength="371.39" lengthAdjust="spacingAndGlyphs">• No need to learn new tool</text><text x="180.49" y="548.5" font-size="29.6" fill="#000" textLength="455.46" lengthAdjust="spacingAndGlyphs">It is the second one line of bullet.</text><text x="231.65" y="572.4" font-size="25.4" fill="#000" textLength="322.02" lengthAdjust="spacingAndGlyphs">•This is the sub bullet here.</text><text x="231.64" y="594.9" font-size="25.4" fill="#000" textLength="367.24" lengthAdjust="spacingAndGlyphs">•Example second line of bullet.</text></svg><text x="19.4" y="506.0" font-size="17.9" fill="#D04220" text-anchor="middle">3</text><rect x="44.4" y="630.9" width="197.6" height="111.2" fill="#fff" stroke="#C9C9C9" stroke-width="1"/><svg x="44.4" y="630.9" width="197.6" height="111.2" viewBox="0 -8 1360 766" preserveAspectRatio="none" overflow="hidden"><rect x="1003.2" y="59" width="31.7" height="22.6" rx="1.2" fill="#000"/><rect x="1008.1" y="70.8" width="5.7" height="7.5" fill="#fff"/><rect x="1016.4" y="66.3" width="5.7" height="12" fill="#fff"/><rect x="1025.3" y="63.2" width="5.700" height="15.100" fill="#fff"/><path d="M1015.4 81.600L1012.200 90.600M1018.800 81.600V90.600M1022.700 81.600L1026.300 90.600" stroke="#000" stroke-width="1.800"/><text x="1044.57" y="83.0" font-size="23.6" fill="#000" textLength="140.35" lengthAdjust="spacingAndGlyphs" font-weight="bold">MagicSlides</text><text x="309.08" y="370.6" font-size="44.2" fill="#000" textLength="743.06" lengthAdjust="spacingAndGlyphs" font-weight="bold" stroke="#000" stroke-width="1.500" stroke-linejoin="round">Professional Presentations in Seconds with AI</text><text x="177.97" y="424.0" font-size="30.5" fill="#000" textLength="543.78" lengthAdjust="spacingAndGlyphs">Never start from a blank slide again.</text><text x="179.50" y="479.0" font-size="30.5" fill="#000" textLength="671.92" lengthAdjust="spacingAndGlyphs">• Create presentation from text, YouTube, pdf</text><text x="179.52" y="512.6" font-size="30.5" fill="#000" textLength="382.59" lengthAdjust="spacingAndGlyphs">• No Credit Card Required</text><text x="179.49" y="555.2" font-size="30.5" fill="#000" textLength="272.70" lengthAdjust="spacingAndGlyphs">• No need to learn</text><text x="457.60" y="555.2" font-size="30.5" fill="#0563C1" textLength="136.54" lengthAdjust="spacingAndGlyphs">new tool</text><path d="M460 560.2H594" stroke="#0563C1" stroke-width="3"/></svg><text x="19.4" y="642.9" font-size="17.9" fill="#555" text-anchor="middle">4</text><rect x="44.4" y="768.0" width="197.6" height="111.2" fill="#fff" stroke="#C9C9C9" stroke-width="1"/><svg x="44.4" y="768.0" width="197.6" height="111.2" viewBox="0 -8 1360 766" preserveAspectRatio="none" overflow="hidden"><rect x="1003.2" y="59" width="31.7" height="22.6" rx="1.2" fill="#000"/><rect x="1008.1" y="70.8" width="5.7" height="7.5" fill="#fff"/><rect x="1016.4" y="66.3" width="5.7" height="12" fill="#fff"/><rect x="1025.3" y="63.2" width="5.700" height="15.100" fill="#fff"/><path d="M1015.4 81.600L1012.200 90.600M1018.800 81.600V90.600M1022.700 81.600L1026.300 90.600" stroke="#000" stroke-width="1.800"/><text x="1044.57" y="83.0" font-size="23.6" fill="#000" textLength="140.35" lengthAdjust="spacingAndGlyphs" font-weight="bold">MagicSlides</text><defs><linearGradient id="eg" x1="0" y1="0" x2="0" y2="1"><stop offset="0" stop-color="#8c8c8c"/><stop offset="0.32" stop-color="#c9c9c9"/><stop offset="1" stop-color="#d6d6d6"/></linearGradient><filter id="en" x="0" y="0" width="1" height="1"><feTurbulence type="fractalNoise" baseFrequency="0.035 0.05" numOctaves="3" seed="7"/><feColorMatrix type="matrix" values="0 0 0 0 0.15  0 0 0 0 0.15  0 0 0 0 0.15  1.6 1.6 1.6 0 -1.9"/></filter><filter id="ew" x="0" y="0" width="1" height="1"><feTurbulence type="fractalNoise" baseFrequency="0.04 0.06" numOctaves="3" seed="11"/><feColorMatrix type="matrix" values="0 0 0 0 1  0 0 0 0 1  0 0 0 0 1  1.6 1.6 1.6 0 -2.0"/></filter><clipPath id="ec"><rect x="417" y="232" width="500" height="335"/></clipPath></defs><g clip-path="url(#ec)"><rect x="417" y="232" width="500" height="335" fill="url(#eg)"/><path d="M417 232H917V332Q842 346 777 299T642 272T417 285Z" fill="#5a5a5a" opacity="0.6"/><ellipse cx="867" cy="255" rx="45" ry="34" fill="#2e2e2e" opacity="0.8"/><rect x="417" y="232" width="500" height="335" filter="url(#en)" opacity="0.5"/><rect x="417" y="232" width="500" height="335" filter="url(#ew)" opacity="0.6"/><g fill="none" stroke="#5a5a5a" stroke-width="7.0"><path d="M512 453L502 500L509 550M532 456L492 493M627 460L622 553M642 453L632 533"/></g><path d="M487 419Q497 389 567 396L647 399L667 379L687 406Q677 440 647 460Q597 476 537 463Q492 466 487 419Z" fill="#3c3c3c"/><path d="M517 440Q582 480 647 446L647 460Q597 476 537 463Z" fill="#2a2a2a"/><ellipse cx="679" cy="383" rx="13" ry="20" fill="#9a9a9a"/><path d="M652 356L672 366M707 352L687 366" stroke="#3c3c3c" stroke-width="10.0"/><g fill="none" stroke="#6a6a6a" stroke-width="6.0"><path d="M672 359Q642 332 637 285M684 359Q732 332 737 282M647 332L632 322M722 332L737 326"/></g></g><defs><linearGradient id="sq" x1="0" y1="0" x2="0" y2="1"><stop offset="0" stop-color="#9c8a2e"/><stop offset="0.55" stop-color="#b08c38"/><stop offset="1" stop-color="#c39446"/></linearGradient></defs><rect x="596" y="267" width="170" height="149" fill="url(#sq)"/><g fill="none" stroke="#7a4a22" stroke-width="7.0"><path d="M672 359Q642 332 637 285M684 359Q732 332 737 282"/></g><ellipse cx="679" cy="383" rx="13" ry="22" fill="#b98a5a"/><path d="M652 356L672 366M707 352L687 366" stroke="#6d3b18" stroke-width="10.0"/><path d="M597 416L597 403L652 399L667 389L667 416Z" fill="#7a3f18"/></svg><text x="19.4" y="780.0" font-size="17.9" fill="#555" text-anchor="middle">5</text><rect x="44.4" y="905.3" width="197.6" height="111.2" fill="#fff" stroke="#C9C9C9" stroke-width="1"/><svg x="44.4" y="905.3" width="197.6" height="111.2" viewBox="0 -8 1360 766" preserveAspectRatio="none" overflow="hidden"><rect x="1003.2" y="59" width="31.7" height="22.6" rx="1.2" fill="#000"/><rect x="1008.1" y="70.8" width="5.7" height="7.5" fill="#fff"/><rect x="1016.4" y="66.3" width="5.7" height="12" fill="#fff"/><rect x="1025.3" y="63.2" width="5.700" height="15.100" fill="#fff"/><path d="M1015.4 81.600L1012.200 90.600M1018.800 81.600V90.600M1022.700 81.600L1026.300 90.600" stroke="#000" stroke-width="1.800"/><text x="1044.57" y="83.0" font-size="23.6" fill="#000" textLength="140.35" lengthAdjust="spacingAndGlyphs" font-weight="bold">MagicSlides</text><defs><linearGradient id="fg" x1="0" y1="0" x2="0" y2="1"><stop offset="0" stop-color="#8d8a3c"/><stop offset="0.32" stop-color="#b98f45"/><stop offset="1" stop-color="#bd8f48"/></linearGradient><filter id="fn" x="0" y="0" width="1" height="1"><feTurbulence type="fractalNoise" baseFrequency="0.035 0.05" numOctaves="3" seed="7"/><feColorMatrix type="matrix" values="0 0 0 0 0.35  0 0 0 0 0.22  0 0 0 0 0.08  1.6 1.6 1.6 0 -1.9"/></filter><filter id="fw" x="0" y="0" width="1" height="1"><feTurbulence type="fractalNoise" baseFrequency="0.04 0.06" numOctaves="3" seed="11"/><feColorMatrix type="matrix" values="0 0 0 0 1  0 0 0 0 0.9  0 0 0 0 0.65  1.6 1.6 1.6 0 -2.0"/></filter><clipPath id="fc"><rect x="443" y="223" width="468" height="308"/></clipPath></defs><g clip-path="url(#fc)"><rect x="443" y="223" width="468" height="308" fill="url(#fg)"/><path d="M443 223H911V315Q817 334 724 303T583 291T443 303Z" fill="#8a8c3a" opacity="0.55"/><path d="M677 223H836L817 278Q747 291 686 254Z" fill="#8a5a2c" opacity="0.85"/><ellipse cx="878" cy="247" rx="37" ry="31" fill="#4f7a22" opacity="0.9"/><rect x="443" y="223" width="468" height="308" filter="url(#fn)" opacity="0.5"/><rect x="443" y="223" width="468" height="308" filter="url(#fw)" opacity="0.35"/><g fill="none" stroke="#8a6a4a" stroke-width="6.5"><path d="M532 426L523 469L530 516M551 429L513 463M639 432L635 519M653 426L644 500"/></g><path d="M508 395Q518 368 583 374L658 377L677 358L696 383Q686 414 658 432Q611 448 555 436Q513 439 508 395Z" fill="#6d3b18"/><path d="M537 414Q597 451 658 420L658 432Q611 448 555 436Z" fill="#4a2810"/><ellipse cx="689" cy="362" rx="12" ry="19" fill="#c9a77a"/><path d="M663 337L682 346M714 334L696 346" stroke="#6d3b18" stroke-width="9.4"/><g fill="none" stroke="#7a5a3a" stroke-width="5.6"><path d="M682 340Q653 315 649 272M693 340Q738 315 742 269M658 315L644 306M728 315L742 309"/></g></g></svg><text x="19.4" y="917.3" font-size="17.9" fill="#555" text-anchor="middle">6</text><polygon points="19.5,923.7 21.0,927.8 25.3,927.9 21.9,930.6 23.1,934.7 19.5,932.3 15.9,934.7 17.1,930.6 13.7,927.9 18.0,927.8" fill="#666"/><path d="M12.900 925.1H15.100M12.900 931.1H15.100" stroke="#666" stroke-width="1.200"/><rect x="267" y="198" width="19" height="793" fill="#F3F3F3"/><rect x="267.5" y="198.5" width="18" height="18" fill="#fff" stroke="#8E8E8E" stroke-width="1"/><path d="M271.9 209.1L276.5 203.9L281.1 209.1Z" fill="#222"/><rect x="267.5" y="217.5" width="18" height="472" fill="#fff" stroke="#ABABAB" stroke-width="1"/><rect x="267.5" y="972.5" width="18" height="18" fill="#fff" stroke="#8E8E8E" stroke-width="1"/><path d="M271.9 979.4L276.5 984.6L281.1 979.4Z" fill="#222"/><path d="M290.500 196V990.500" stroke="#CFCFCF" stroke-width="1"/></svg></div>
<div class="r editor" style="left:291px;top:196px;width:1628px;height:797px;background:#E6E6E6"><svg width="1628" height="797" viewBox="291 196 1628 797"><rect x="415.5" y="208.200" width="1361" height="766.300" fill="#fff" stroke="#C4C4C4" stroke-width="1"/><svg x="416" y="208" width="1360" height="766" viewBox="0 0 1360 766" overflow="hidden"><rect x="1003.2" y="59" width="31.7" height="22.6" rx="1.2" fill="#000"/><rect x="1008.1" y="70.8" width="5.7" height="7.5" fill="#fff"/><rect x="1016.4" y="66.3" width="5.7" height="12" fill="#fff"/><rect x="1025.3" y="63.2" width="5.700" height="15.100" fill="#fff"/><path d="M1015.4 81.600L1012.200 90.600M1018.800 81.600V90.600M1022.700 81.600L1026.300 90.600" stroke="#000" stroke-width="1.800"/><text x="1044.57" y="83.0" font-size="23.6" fill="#000" textLength="140.35" lengthAdjust="spacingAndGlyphs" font-weight="bold">MagicSlides</text><text x="309.08" y="377.4" font-size="44.2" fill="#000" textLength="743.06" lengthAdjust="spacingAndGlyphs" font-weight="bold" stroke="#000" stroke-width="1.500" stroke-linejoin="round">Professional Presentations in Seconds with AI</text><text x="180.29" y="428.0" font-size="29.6" fill="#000" textLength="500.26" lengthAdjust="spacingAndGlyphs">Never start from a blank slide again.</text><text x="180.65" y="470.5" font-size="29.6" fill="#000" textLength="622.43" lengthAdjust="spacingAndGlyphs">• Create presentation from text, YouTube, pdf</text><text x="180.68" y="496.6" font-size="29.6" fill="#000" textLength="352.01" lengthAdjust="spacingAndGlyphs">• No Credit Card Required</text><text x="180.66" y="522.6" font-size="29.6" fill="#000" textLength="371.39" lengthAdjust="spacingAndGlyphs">• No need to learn new tool</text><rect x="171.1" y="522" width="478.900" height="89.700" rx="6.500" fill="#fff" stroke="#F04438" stroke-width="6.600"/><text x="180.49" y="548.5" font-size="29.6" fill="#000" textLength="455.46" lengthAdjust="spacingAndGlyphs">It is the second one line of bullet.</text><text x="231.65" y="572.4" font-size="25.4" fill="#000" textLength="322.02" lengthAdjust="spacingAndGlyphs">•This is the sub bullet here.</text><text x="231.64" y="594.9" font-size="25.4" fill="#000" textLength="367.24" lengthAdjust="spacingAndGlyphs">•Example second line of bullet.</text><g fill="none" stroke="#F04438" stroke-linecap="round" stroke-linejoin="round"><path d="M763.600 696.400L608.500 600.400" stroke-width="6.400"/><path d="M628.500 599.900L607.800 599.900L617 618.800" stroke-width="7"/></g><text x="780.70" y="700.9" font-size="23.6" fill="#F04438" textLength="269.82" lengthAdjust="spacingAndGlyphs" font-family='"Liberation Serif", serif' stroke="#F04438" stroke-width="0.35">sub bullets added over here.</text></svg><rect x="1900" y="198" width="19" height="724" fill="#F3F3F3"/><rect x="1900.5" y="198.5" width="18" height="18" fill="#fff" stroke="#8E8E8E" stroke-width="1"/><path d="M1904.9 209.1L1909.5 203.9L1914.1 209.1Z" fill="#222"/><rect x="1900.5" y="371.5" width="18" height="73" fill="#fff" stroke="#ABABAB" stroke-width="1"/><rect x="1900.5" y="903.5" width="18" height="18" fill="#fff" stroke="#8E8E8E" stroke-width="1"/><path d="M1904.9 910.4L1909.5 915.6L1914.1 910.4Z" fill="#222"/><path d="M1903.5 934.4L1909.5 926.2L1915.5 934.4ZM1903.5 940.8L1909.5 932.6L1915.5 940.8ZM1903.5 947.1L1909.5 955.3L1915.5 947.1ZM1903.5 953.5L1909.5 961.9L1915.5 953.5Z" fill="#6A6A6A" stroke="#6A6A6A" stroke-width="0.800" stroke-linejoin="round"/><path d="M293 990.500H1919" stroke="#C4C4C4" stroke-width="1"/></svg></div>
<div class="r statusbar" style="left:0px;top:993px;width:1919px;height:24px;background:#F3F3F3"><svg width="1919" height="24" viewBox="0 993 1919 24"><path d="M0 993.500H1919" stroke="#D2D2D2" stroke-width="1"/><text x="14.90" y="1012.3" font-size="13" fill="#3B3B3B" textLength="66.33" lengthAdjust="spacingAndGlyphs">Slide 3 of 9</text><g fill="none" stroke="#6A6A6A" stroke-width="1"><path d="M113.500 999.800H105.400V1011.600H111.600L113.500 1013.400L115.400 1011.600H121.600V1008.400M113.500 999.800H121.600V1001.200M113.500 999.800V1013"/><path d="M115.600 1005.800L117.600 1008.400L121.500 1002.600" stroke-width="1.300"/></g><text x="144.52" y="1012.3" font-size="13" fill="#3B3B3B" textLength="81.50" lengthAdjust="spacingAndGlyphs">English (India)</text><g fill="none" stroke="#505050" stroke-width="1.100"><path d="M303.500 999.600A7.400 7.400 0 0 0 304.500 1013.600" stroke-dasharray="2.600 1.400"/><path d="M302.600 999.200V1006.400M300.600 1004.400L302.600 1006.600L304.600 1004.400M303.600 1006.600H310.600M308.600 1004.600L310.800 1006.600L308.600 1008.600"/><path d="M305.400 1009L312.600 1016.400M312.600 1009L305.400 1016.400" stroke="#333" stroke-width="1.700"/></g><text x="317.60" y="1012.3" font-size="13" fill="#262626" textLength="151.62" lengthAdjust="spacingAndGlyphs" font-weight="bold">Accessibility: Investigate</text><path d="M1289 1006.500H1302M1289 1009.500H1302M1289 1012.500H1296" stroke="#505050" stroke-width="1"/><path d="M1291.800 1003.800L1295.400 1000.200L1299 1003.800Z" fill="#505050"/><text x="1307.16" y="1012.1" font-size="13" fill="#3B3B3B" textLength="35.22" lengthAdjust="spacingAndGlyphs">Notes</text><path d="M1369.600 998.800H1384.200Q1385.800 998.800 1385.800 1000.400V1008.400Q1385.800 1010 1384.200 1010H1376.400L1372.600 1013.800V1010H1369.600Q1368 1010 1368 1008.400V1000.400Q1368 998.800 1369.600 998.800Z" fill="#505050"/><text x="1389.40" y="1012.1" font-size="13" fill="#3B3B3B" textLength="61.31" lengthAdjust="spacingAndGlyphs">Comments</text><rect x="1475.300" y="993.600" width="49.300" height="23.400" fill="#C6C6C6"/><g fill="none" stroke="#6A6A6A" stroke-width="1.100"><rect x="1491.500" y="999.500" width="16" height="14.500"/><path d="M1495.500 999.500V1014M1495.500 1009.500H1507.500"/><rect x="1499" y="1002" width="6" height="4" stroke-width="0.900"/><rect x="1541" y="999.300" width="5.800" height="5"/><rect x="1551.200" y="999.300" width="5.800" height="5"/><rect x="1541" y="1008.200" width="5.800" height="5"/><rect x="1551.200" y="1008.200" width="5.800" height="5"/><path d="M1599.400 1000.400V1013.200M1599.400 1000.600C1596.800 999.200 1593.600 999.200 1591 1000V1011.600C1593.600 1010.800 1596.800 1010.800 1599.400 1012.400C1602 1010.800 1605.200 1010.800 1607.800 1011.600V1000C1605.200 999.200 1602 999.200 1599.400 1000.600"/><path d="M1593 1003H1597.400M1593 1005.400H1597.400M1593 1007.800H1597.400M1601.400 1003H1605.800M1601.400 1005.400H1605.800M1601.400 1007.800H1605.800" stroke-width="0.800"/><path d="M1641 1000.300H1657.600" stroke-width="1.800"/><path d="M1643.500 1000.600V1008H1655.300V1000.600M1649.400 1008V1013M1646 1013.300H1652.800"/></g><path d="M1682 1006.400H1691.400" stroke="#444" stroke-width="1.200"/><path d="M1697.800 1006.400H1822.900" stroke="#6A6A6A" stroke-width="1"/><path d="M1760.400 1002.200V1010.800" stroke="#6A6A6A" stroke-width="1"/><rect x="1747.800" y="999.600" width="5.800" height="14.200" fill="#444"/><path d="M1828.700 1006.400H1838.100M1833.400 1001.700V1011.100" stroke="#444" stroke-width="1.200"/><text x="1854.40" y="1012.1" font-size="13" fill="#3B3B3B" textLength="23.40" lengthAdjust="spacingAndGlyphs">85%</text><g fill="none" stroke="#6A6A6A" stroke-width="1"><rect x="1898.400" y="1000.600" width="12.200" height="12.200"/><path d="M1904.500 1002.400V1011M1900.200 1006.700H1908.800M1903 1003.800L1904.500 1002.200L1906 1003.800M1903 1009.600L1904.500 1011.200L1906 1009.600M1901.600 1005.200L1900 1006.700L1901.600 1008.200M1907.400 1005.200L1909 1006.700L1907.400 1008.200" stroke-width="0.800"/></g></svg></div>
</body></html>
